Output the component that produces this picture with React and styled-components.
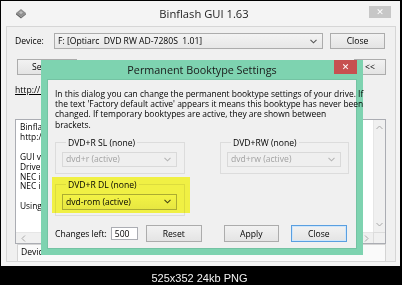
import React from 'react'
import styled, { createGlobalStyle } from 'styled-components'

const GlobalStyle = createGlobalStyle`
  html, body { margin: 0; padding: 0; background: #000; }
  body {
    width: 402px;
    height: 285px;
    overflow: hidden;
    font-family: "Open Sans", "Noto Sans", sans-serif;
    font-size: 8.6px;
    color: #000;
  }
  * { box-sizing: border-box; }
`

const Screen = styled.div`
  position: relative;
  width: 402px;
  height: 285px;
  background: #000;
  display: flex;
  flex-direction: column;
  padding: 1px 2px 0 1px;
`

const Window = styled.div`
  width: 399px;
  height: 265px;
  background: #f4f4f4;
  display: flex;
  flex-direction: column;
  padding: 0 4px 4px 5px;
`

const TitleBar = styled.div`
  position: relative;
  height: 25px;
  display: flex;
  align-items: center;
  justify-content: center;
`

const AppIcon = styled.svg`
  position: absolute;
  left: 9px;
  top: 7px;
`

const Title = styled.div`
  font-size: 11.2px;
  color: #1e1e1e;
  margin-left: 6px;
`

const CloseX = styled.div`
  position: absolute;
  right: ${p => p.$right}px;
  top: ${p => p.$top}px;
  width: ${p => p.$w}px;
  height: ${p => p.$h}px;
  background: ${p => p.$bg};
  color: #fff;
  display: flex;
  align-items: center;
  justify-content: center;
  font-family: "DejaVu Sans", sans-serif;
  font-size: 9px;
  font-weight: bold;
`

const Client = styled.div`
  flex: 1;
  background: #f0f0f0;
  border: 1px solid #d6d6d6;
  display: flex;
  flex-direction: column;
  padding: 6px 9px 0 8px;
`

const Row = styled.div`
  display: flex;
  align-items: center;
  height: ${p => p.$h}px;
  margin-top: ${p => p.$mt || 0}px;
  padding-left: ${p => p.$pl || 0}px;
  justify-content: ${p => p.$justify || 'flex-start'};
`

const Label = styled.span`
  width: ${p => (p.$w ? `${p.$w}px` : 'auto')};
  flex-shrink: 0;
  white-space: nowrap;
`

const Button = styled.div`
  width: ${p => p.$w}px;
  height: ${p => p.$h || 16}px;
  margin-left: ${p => p.$ml || 0}px;
  flex-shrink: 0;
  display: flex;
  align-items: center;
  justify-content: ${p => (p.$left ? 'flex-start' : 'center')};
  padding-left: ${p => p.$pl || 0}px;
  background: linear-gradient(#f2f2f2, #e4e4e4);
  border: 1px solid ${p => (p.$default ? '#5a9fe0' : '#acacac')};
  box-shadow: ${p => (p.$default ? 'inset 0 0 0 1px #cfe6fb' : 'none')};
  white-space: nowrap;
  overflow: hidden;
`

const Combo = styled.div`
  width: ${p => p.$w}px;
  height: ${p => p.$h || 15}px;
  margin-left: ${p => p.$ml || 0}px;
  flex-shrink: 0;
  display: flex;
  align-items: center;
  justify-content: space-between;
  padding: 0 5px 0 3px;
  background: ${p => (p.$disabled ? '#efefef' : 'linear-gradient(#f3f3f3, #e7e7e7)')};
  border: 1px solid ${p => (p.$disabled ? '#d9d9d9' : '#acacac')};
  color: ${p => (p.$disabled ? '#a2a2a2' : '#000')};
  white-space: nowrap;
`

const Chevron = ({ color }) => (
  <svg width="7" height="5" viewBox="0 0 7 5">
    <polyline points="0.5,0.8 3.5,3.8 6.5,0.8" fill="none" stroke={color} strokeWidth="1.1" />
  </svg>
)

const Link = styled.span`
  text-decoration: underline;
  white-space: nowrap;
`

const ListBox = styled.div`
  margin-top: 24px;
  width: 371px;
  height: 125px;
  background: #fff;
  border: 1px solid #abadb3;
  display: grid;
  grid-template-columns: 1fr 12px;
  grid-template-rows: 1fr 11px;
`

const ListText = styled.div`
  padding: 2px 4px;
  line-height: 9.9px;
  font-size: 8.4px;
  white-space: pre;
  overflow: hidden;
`

const VScroll = styled.div`
  background: #f0f0f0;
  border-left: 1px solid #e6e6e6;
  display: flex;
  flex-direction: column;
  justify-content: space-between;
  align-items: center;
  padding: 5px 0 5px;
`

const HScroll = styled.div`
  background: #f0f0f0;
  border-top: 1px solid #e6e6e6;
  display: flex;
  justify-content: space-between;
  align-items: center;
  padding: 0 4px 0 5px;
`

const Corner = styled.div`
  background: #f0f0f0;
  border-top: 1px solid #dcdcdc;
  border-left: 1px solid #dcdcdc;
`

const Arrow = ({ dir }) => {
  const pts = {
    up: '0.5,4 3.5,1 6.5,4',
    down: '0.5,1 3.5,4 6.5,1',
    left: '4,0.5 1,3.5 4,6.5',
    right: '1,0.5 4,3.5 1,6.5',
  }[dir]
  const vertical = dir === 'up' || dir === 'down'
  return (
    <svg width={vertical ? 7 : 5} height={vertical ? 5 : 7} viewBox={vertical ? '0 0 7 5' : '0 0 5 7'}>
      <polyline points={pts} fill="none" stroke="#a8a8a8" strokeWidth="1" />
    </svg>
  )
}

const StatusBar = styled.div`
  margin-left: 2px;
  width: 369px;
  height: 17px;
  background: #fafafa;
  border: 1px solid #d4d4d4;
  border-bottom: none;
  display: flex;
  align-items: flex-start;
  padding: 2px 0 0 3px;
  line-height: 10px;
`

const Caption = styled.div`
  flex: 1;
  display: flex;
  align-items: center;
  justify-content: center;
  padding-top: 5px;
  padding-right: 2px;
  font-family: "Liberation Sans", Arial, sans-serif;
  font-size: 11px;
  color: #f2f2f2;
`

/* the modal dialog floats over the main window */
const Dialog = styled.div`
  position: absolute;
  left: 41px;
  top: 60px;
  width: 322px;
  height: 195px;
  background: #7ed3b0;
  display: flex;
  flex-direction: column;
  padding: 0 6px 6px 6px;
`

const DialogTitle = styled.div`
  position: relative;
  height: 19px;
  display: flex;
  align-items: center;
  justify-content: center;
  font-size: 10.8px;
  color: #1a1a1a;
`

const DialogBody = styled.div`
  position: relative;
  flex: 1;
  background: #f0f0f0;
  border: 1px solid #74c3a3;
  display: flex;
  flex-direction: column;
  padding: 9px 0 6px 7px;
`

const Intro = styled.p`
  margin: 0;
  font-size: 8.45px;
  line-height: 10.2px;
  white-space: nowrap;
`

const GroupRow = styled.div`
  display: flex;
  margin-top: ${p => p.$mt}px;
`

const Group = styled.fieldset`
  margin: 0 0 0 ${p => p.$ml || 0}px;
  width: ${p => p.$w}px;
  height: 36px;
  padding: 0 6px;
  border: 1px solid #dcdcdc;
  border-radius: 0;
`

const Legend = styled.legend`
  padding: 0 2px;
  margin-left: 4px;
  line-height: 10px;
  white-space: nowrap;
`

const GroupCombo = styled(Combo)`
  margin-top: 4px;
`

const Highlight = styled.div`
  position: absolute;
  left: 4px;
  top: 97px;
  width: 138px;
  height: 36px;
  background: rgb(255, 255, 72);
  mix-blend-mode: multiply;
  pointer-events: none;
`

const Footer = styled.div`
  margin-top: auto;
  display: flex;
  align-items: center;
  height: 17px;
`

const Field = styled.div`
  width: 27px;
  height: 13px;
  margin-left: 4px;
  background: #fff;
  border: 1px solid #abadb3;
  display: flex;
  align-items: center;
  padding-left: 3px;
`

export default function App() {
  const log = ['Binflash', 'http://', '', 'GUI ver', 'Drive', 'NEC ini', 'NEC id', '', 'Using']

  return (
    <>
      <GlobalStyle />
      <Screen>
        <Window>
          <TitleBar>
            <AppIcon width="12" height="11" viewBox="0 0 12 11">
              <polygon points="1,5 6,1 11,5 6,9" fill="#8f8f8f" />
              <polygon points="1,5 6,9 6,10.5 1,6.5" fill="#5e5e5e" />
              <polygon points="6,9 11,5 11,6.5 6,10.5" fill="#747474" />
              <polygon points="4,4.6 6,3 8,4.6 6,6.2" fill="#bdbdbd" />
            </AppIcon>
            <Title>Binflash GUI 1.63</Title>
            <CloseX $right={5} $top={5} $w={22} $h={12} $bg="#c7c7c7">✕</CloseX>
          </TitleBar>

          <Client>
            <Row $h={16}>
              <Label $w={39}>Device:</Label>
              <Combo $w={269} $h={16}>
                <span>F: [Optiarc&nbsp; DVD RW AD-7280S&nbsp; 1.01]</span>
                <Chevron color="#555" />
              </Combo>
              <Button $w={55} $ml={7}>Close</Button>
            </Row>
            <Row $h={16} $mt={10} $pl={2} $justify="space-between">
              <Button $w={60} $left $pl={14}>Select</Button>
              <Button $w={32}>&lt;&lt;</Button>
            </Row>
            <Row $h={10} $mt={10}>
              <Link>http://liggy</Link>
            </Row>
            <ListBox>
              <ListText>{log.join('\n')}</ListText>
              <VScroll>
                <Arrow dir="up" />
                <Arrow dir="down" />
              </VScroll>
              <HScroll>
                <Arrow dir="left" />
                <Arrow dir="right" />
              </HScroll>
              <Corner />
            </ListBox>
            <StatusBar>Device</StatusBar>
          </Client>
        </Window>

        <Caption>525x352 24kb PNG</Caption>

        <Dialog>
          <DialogTitle>
            Permanent Booktype Settings
            <CloseX $right={0} $top={0} $w={23} $h={14} $bg="#c75050">✕</CloseX>
          </DialogTitle>
          <DialogBody>
            <Intro>
              In this dialog you can change the permanent booktype settings of your drive. If
              <br />
              the text 'Factory default active' appears it means this booktype has never been
              <br />
              changed. If temporary booktypes are active, they are shown between
              <br />
              brackets.
            </Intro>

            <GroupRow $mt={8}>
              <Group $w={130}>
                <Legend>DVD+R SL (none)</Legend>
                <GroupCombo $w={115} $disabled>
                  <span>dvd+r (active)</span>
                  <Chevron color="#b5b5b5" />
                </GroupCombo>
              </Group>
              <Group $w={129} $ml={35}>
                <Legend>DVD+RW (none)</Legend>
                <GroupCombo $w={114} $disabled>
                  <span>dvd+rw (active)</span>
                  <Chevron color="#b5b5b5" />
                </GroupCombo>
              </Group>
            </GroupRow>

            <GroupRow $mt={6}>
              <Group $w={130}>
                <Legend>DVD+R DL (none)</Legend>
                <GroupCombo $w={115} $h={16}>
                  <span>dvd-rom (active)</span>
                  <Chevron color="#444" />
                </GroupCombo>
              </Group>
            </GroupRow>

            <Highlight />

            <Footer>
              <Label>Changes left:</Label>
              <Field>500</Field>
              <Button $w={56} $h={17} $ml={8}>Reset</Button>
              <Button $w={55} $h={17} $ml={22}>Apply</Button>
              <Button $w={56} $h={17} $ml={12} $default>Close</Button>
            </Footer>
          </DialogBody>
        </Dialog>
      </Screen>
    </>
  )
}
